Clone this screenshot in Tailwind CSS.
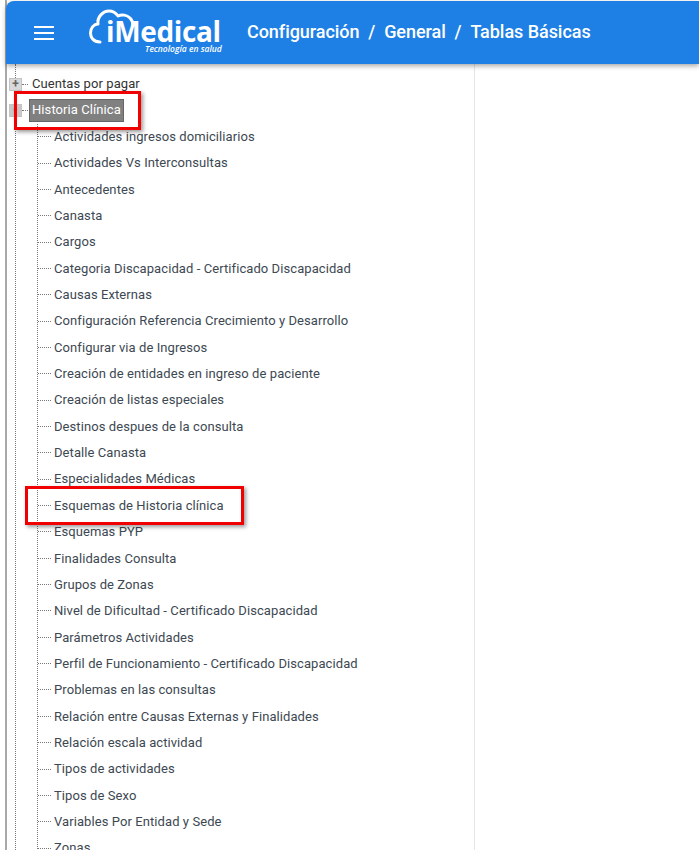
<!DOCTYPE html>
<html lang="es">
<head>
    <meta charset="UTF-8">
    <meta name="viewport" content="width=device-width, initial-scale=1.0">
    <title>Tablas Básicas | iMedical</title>
    <script src="https://cdn.jsdelivr.net/npm/@tailwindcss/browser@4"></script>
</head>
<body class="bg-white text-[#3d4852] font-['Roboto',sans-serif]">
<div class="relative w-[699px] h-[850px] overflow-hidden bg-white">
    <div class="ml-[5px] h-[850px] border-l-2 border-[#a8a8a8] flex flex-col">

        <header class="relative z-10 shrink-0 h-[63px] mt-px -ml-px bg-[#1e7fe5] rounded-tl-lg shadow-[0_2px_5px_rgba(0,0,0,0.35)] flex items-center text-white">
            <div class="ml-[28px] w-[20px] flex flex-col gap-[4px]">
                <span class="block h-[2px] bg-white"></span>
                <span class="block h-[2px] bg-white"></span>
                <span class="block h-[2px] bg-white"></span>
            </div>
            <div class="relative ml-[35px] w-[134px] h-[54px]">
                <svg class="absolute left-0 top-0" width="50" height="40" viewBox="0 0 50 40" fill="none" stroke="white" stroke-width="3" stroke-linecap="round" stroke-linejoin="round">
                    <path d="M11 36 C4 36 1.5 31 1.5 27 C1.5 22 5 18 9 18 C8 11 14 5 20 5 C24 5 27 7 29 10 C33 8 38 9 41 12 C43 14 44 17 44 20"/>
                </svg>
                <span class="absolute left-[17px] top-[12px] text-[28px] leading-[26px] font-bold tracking-[-0.35px] font-['Open_Sans',sans-serif] whitespace-nowrap">iMedical</span>
                <span class="absolute left-[56px] top-[39px] text-[8.5px] leading-[8px] font-semibold italic whitespace-nowrap font-['Open_Sans',sans-serif]">Tecnología en salud</span>
            </div>
            <nav class="ml-[24px] pb-[3px] text-[18px] tracking-[-0.05px] font-medium flex whitespace-pre">
                <span>Configuración</span><span>  /  </span><span>General</span><span>  /  </span><span>Tablas Básicas</span>
            </nav>
        </header>

        <main class="relative flex-1 min-h-0 flex">
            <div class="w-[468px] border-r border-[#e6e6e6] h-full relative">
                <div class="absolute left-[8px] top-0 bottom-0 border-l border-dotted border-[#777]"></div>

                <ul class="relative pt-[7px] text-[13px] tracking-[0.08px]">
                    <li class="h-[26px] flex items-center">
                        <span class="ml-[2px] w-[13px] h-[13px] bg-[#d9d9d9] border border-[#c4c4c4] flex items-center justify-center text-[#666] text-[12px] leading-none font-bold">+</span>
                        <span class="w-[6px] border-t border-dotted border-[#777]"></span>
                        <span class="ml-[4px] text-[#333]">Cuentas por pagar</span>
                    </li>
                    <li class="h-[26px] flex items-center">
                        <span class="ml-[2px] w-[13px] h-[13px] bg-[#c8c8c8] border border-[#c4c4c4] flex items-center justify-center text-[#888] text-[12px] leading-none font-bold">-</span>
                        <span class="w-[6px] border-t border-dotted border-[#777]"></span>
                        <span class="ml-[1px] px-[2px] w-[95px] h-[23px] leading-[20px] whitespace-nowrap bg-[#808080] border border-[#666] text-white">Historia Clínica</span>
                    </li>
                </ul>

                <ul class="relative ml-[30px] mt-[0.6px] border-l border-dotted border-[#777] text-[13px] tracking-[0.08px] text-[#3d4852] whitespace-nowrap">
                    <li class="h-[26.35px] flex items-center"><span class="w-[13px] border-t border-dotted border-[#777]"></span><span class="ml-[3px]">Actividades ingresos domiciliarios</span></li>
                    <li class="h-[26.35px] flex items-center"><span class="w-[13px] border-t border-dotted border-[#777]"></span><span class="ml-[3px]">Actividades Vs Interconsultas</span></li>
                    <li class="h-[26.35px] flex items-center"><span class="w-[13px] border-t border-dotted border-[#777]"></span><span class="ml-[3px]">Antecedentes</span></li>
                    <li class="h-[26.35px] flex items-center"><span class="w-[13px] border-t border-dotted border-[#777]"></span><span class="ml-[3px]">Canasta</span></li>
                    <li class="h-[26.35px] flex items-center"><span class="w-[13px] border-t border-dotted border-[#777]"></span><span class="ml-[3px]">Cargos</span></li>
                    <li class="h-[26.35px] flex items-center"><span class="w-[13px] border-t border-dotted border-[#777]"></span><span class="ml-[3px]">Categoria Discapacidad - Certificado Discapacidad</span></li>
                    <li class="h-[26.35px] flex items-center"><span class="w-[13px] border-t border-dotted border-[#777]"></span><span class="ml-[3px]">Causas Externas</span></li>
                    <li class="h-[26.35px] flex items-center"><span class="w-[13px] border-t border-dotted border-[#777]"></span><span class="ml-[3px]">Configuración Referencia Crecimiento y Desarrollo</span></li>
                    <li class="h-[26.35px] flex items-center"><span class="w-[13px] border-t border-dotted border-[#777]"></span><span class="ml-[3px]">Configurar via de Ingresos</span></li>
                    <li class="h-[26.35px] flex items-center"><span class="w-[13px] border-t border-dotted border-[#777]"></span><span class="ml-[3px]">Creación de entidades en ingreso de paciente</span></li>
                    <li class="h-[26.35px] flex items-center"><span class="w-[13px] border-t border-dotted border-[#777]"></span><span class="ml-[3px]">Creación de listas especiales</span></li>
                    <li class="h-[26.35px] flex items-center"><span class="w-[13px] border-t border-dotted border-[#777]"></span><span class="ml-[3px]">Destinos despues de la consulta</span></li>
                    <li class="h-[26.35px] flex items-center"><span class="w-[13px] border-t border-dotted border-[#777]"></span><span class="ml-[3px]">Detalle Canasta</span></li>
                    <li class="h-[26.35px] flex items-center"><span class="w-[13px] border-t border-dotted border-[#777]"></span><span class="ml-[3px]">Especialidades Médicas</span></li>
                    <li class="h-[26.35px] flex items-center"><span class="w-[13px] border-t border-dotted border-[#777]"></span><span class="ml-[3px]">Esquemas de Historia clínica</span></li>
                    <li class="h-[26.35px] flex items-center"><span class="w-[13px] border-t border-dotted border-[#777]"></span><span class="ml-[3px]">Esquemas PYP</span></li>
                    <li class="h-[26.35px] flex items-center"><span class="w-[13px] border-t border-dotted border-[#777]"></span><span class="ml-[3px]">Finalidades Consulta</span></li>
                    <li class="h-[26.35px] flex items-center"><span class="w-[13px] border-t border-dotted border-[#777]"></span><span class="ml-[3px]">Grupos de Zonas</span></li>
                    <li class="h-[26.35px] flex items-center"><span class="w-[13px] border-t border-dotted border-[#777]"></span><span class="ml-[3px]">Nivel de Dificultad - Certificado Discapacidad</span></li>
                    <li class="h-[26.35px] flex items-center"><span class="w-[13px] border-t border-dotted border-[#777]"></span><span class="ml-[3px]">Parámetros Actividades</span></li>
                    <li class="h-[26.35px] flex items-center"><span class="w-[13px] border-t border-dotted border-[#777]"></span><span class="ml-[3px]">Perfil de Funcionamiento - Certificado Discapacidad</span></li>
                    <li class="h-[26.35px] flex items-center"><span class="w-[13px] border-t border-dotted border-[#777]"></span><span class="ml-[3px]">Problemas en las consultas</span></li>
                    <li class="h-[26.35px] flex items-center"><span class="w-[13px] border-t border-dotted border-[#777]"></span><span class="ml-[3px]">Relación entre Causas Externas y Finalidades</span></li>
                    <li class="h-[26.35px] flex items-center"><span class="w-[13px] border-t border-dotted border-[#777]"></span><span class="ml-[3px]">Relación escala actividad</span></li>
                    <li class="h-[26.35px] flex items-center"><span class="w-[13px] border-t border-dotted border-[#777]"></span><span class="ml-[3px]">Tipos de actividades</span></li>
                    <li class="h-[26.35px] flex items-center"><span class="w-[13px] border-t border-dotted border-[#777]"></span><span class="ml-[3px]">Tipos de Sexo</span></li>
                    <li class="h-[26.35px] flex items-center"><span class="w-[13px] border-t border-dotted border-[#777]"></span><span class="ml-[3px]">Variables Por Entidad y Sede</span></li>
                    <li class="h-[26.35px] flex items-center"><span class="w-[13px] border-t border-dotted border-[#777]"></span><span class="ml-[3px]">Zonas</span></li>
                </ul>
            </div>
        </main>
    </div>

    <!-- red callouts pasted on top of the screenshot -->
    <div class="absolute left-[14px] top-[91px] w-[127px] h-[39px] border-[3px] border-[#f00000] shadow-[2px_2px_4px_rgba(0,0,0,0.4)]"></div>
    <div class="absolute left-[25px] top-[486px] w-[219px] h-[39px] border-[3px] border-[#f00000] shadow-[2px_2px_4px_rgba(0,0,0,0.4)]"></div>
</div>
</body>
</html>
